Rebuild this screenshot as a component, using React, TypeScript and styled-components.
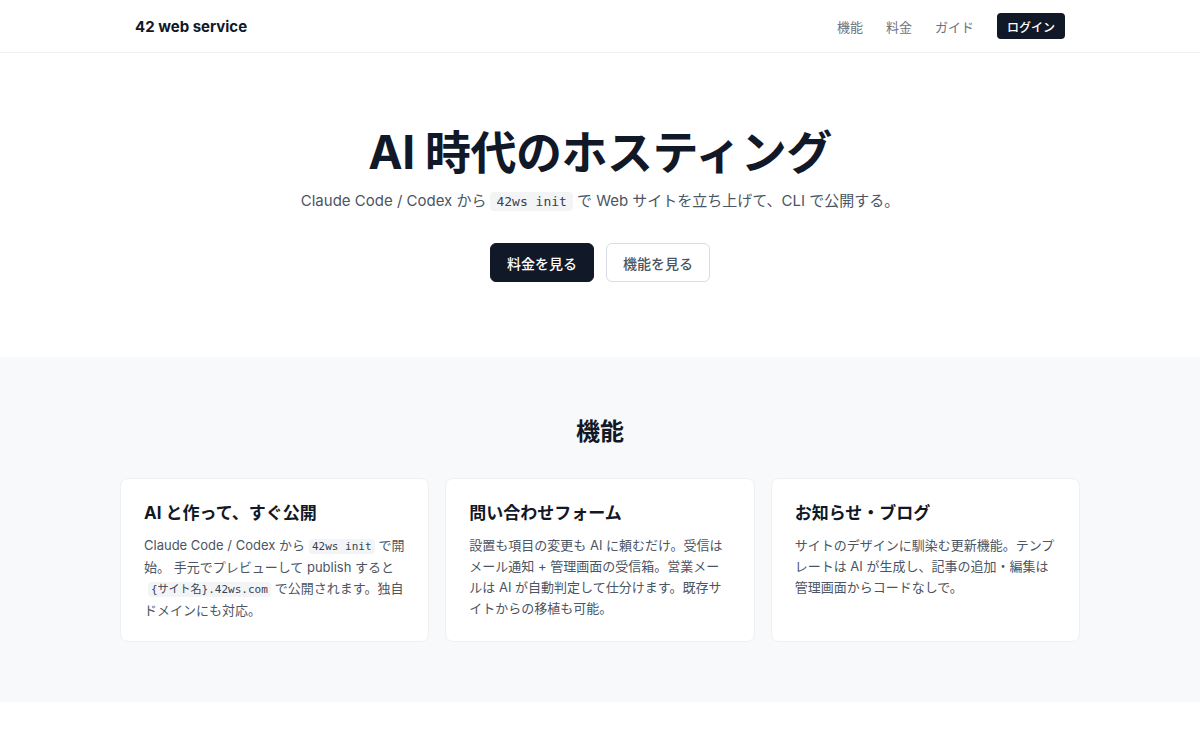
import React from "react";
import styled, { createGlobalStyle } from "styled-components";

const Global = createGlobalStyle`
  * { box-sizing: border-box; }
  body {
    margin: 0;
    font-family: "Inter", "Noto Sans CJK JP", sans-serif;
    color: #111827;
    background: #ffffff;
  }
`;

const Header = styled.header`
  border-bottom: 1px solid #f1f2f4;
  background: #fff;
`;

const HeaderInner = styled.div`
  max-width: 960px;
  margin: 0 auto;
  padding: 0 15px;
  height: 52px;
  display: flex;
  align-items: center;
  justify-content: space-between;
`;

const Logo = styled.div`
  font-size: 15px;
  font-weight: 700;
  color: #111827;
`;

const Nav = styled.nav`
  display: flex;
  align-items: center;
  gap: 23px;
`;

const NavLink = styled.a`
  font-size: 13px;
  color: #6b7280;
  text-decoration: none;
`;

const LoginButton = styled.button`
  height: 26px;
  padding: 0 10px;
  border: none;
  border-radius: 4px;
  background: #111827;
  color: #fff;
  font-size: 12px;
  font-family: inherit;
  font-weight: 500;
`;

const Hero = styled.section`
  padding: 70px 20px 75px;
  text-align: center;
`;

const Title = styled.h1`
  margin: 0;
  font-size: 46px;
  line-height: 58px;
  font-weight: 700;
  color: #111827;
  letter-spacing: -0.5px;
`;

const Lead = styled.p`
  margin: 7px 0 0;
  font-size: 15px;
  line-height: 26px;
  color: #4b5563;
`;

const Code = styled.code<{ $small?: boolean }>`
  font-family: "DejaVu Sans Mono", "Liberation Mono", "Noto Sans CJK JP", monospace;
  font-size: ${(p) => (p.$small ? "11px" : "13px")};
  background: #f3f4f6;
  border-radius: 4px;
  padding: ${(p) => (p.$small ? "1px 3px" : "2px 6px")};
  margin: 0 4px;
  color: #374151;
`;

const Actions = styled.div`
  margin-top: 28px;
  display: flex;
  justify-content: center;
  gap: 12px;
`;

const Button = styled.button<{ $primary?: boolean }>`
  height: 39px;
  padding: 0 16px;
  border-radius: 6px;
  font-size: 14px;
  font-family: inherit;
  font-weight: 500;
  border: 1px solid ${(p) => (p.$primary ? "#111827" : "#d9dce1")};
  background: ${(p) => (p.$primary ? "#111827" : "#fff")};
  color: ${(p) => (p.$primary ? "#fff" : "#4b5563")};
`;

const Features = styled.section`
  background: #f8f9fb;
  padding: 59px 20px 60px;
`;

const SectionTitle = styled.h2`
  margin: 0;
  text-align: center;
  font-size: 24px;
  line-height: 32px;
  font-weight: 700;
  color: #111827;
`;

const Grid = styled.div`
  max-width: 960px;
  margin: 30px auto 0;
  display: grid;
  grid-template-columns: repeat(3, 1fr);
  gap: 16px;
`;

const Card = styled.div`
  background: #fff;
  border: 1px solid #eef0f3;
  border-radius: 8px;
  padding: 21px 23px 20px;
`;

const CardTitle = styled.h3`
  margin: 0;
  font-size: 17px;
  line-height: 27px;
  font-weight: 700;
  color: #111827;
`;

const CardText = styled.p`
  margin: 8px 0 0;
  font-size: 13px;
  line-height: 21px;
  color: #4b5563;
  min-height: 84px;
`;

const Footer = styled.div`
  height: 60px;
  background: #fff;
`;

export default function App() {
  return (
    <>
      <Global />
      <Header>
        <HeaderInner>
          <Logo>42 web service</Logo>
          <Nav>
            <NavLink href="#">機能</NavLink>
            <NavLink href="#">料金</NavLink>
            <NavLink href="#">ガイド</NavLink>
            <LoginButton>ログイン</LoginButton>
          </Nav>
        </HeaderInner>
      </Header>
      <Hero>
        <Title>AI 時代のホスティング</Title>
        <Lead>
          Claude Code / Codex から<Code>42ws init</Code>で Web サイトを立ち上げて、CLI で公開する。
        </Lead>
        <Actions>
          <Button $primary>料金を見る</Button>
          <Button>機能を見る</Button>
        </Actions>
      </Hero>
      <Features>
        <SectionTitle>機能</SectionTitle>
        <Grid>
          <Card>
            <CardTitle>AI と作って、すぐ公開</CardTitle>
            <CardText>
              Claude Code / Codex から<Code $small>42ws init</Code>で開始。 手元でプレビューして publish すると
              <Code $small>{"{サイト名}.42ws.com"}</Code>で公開されます。独自ドメインにも対応。
            </CardText>
          </Card>
          <Card>
            <CardTitle>問い合わせフォーム</CardTitle>
            <CardText>
              設置も項目の変更も AI に頼むだけ。受信はメール通知 + 管理画面の受信箱。営業メールは AI が自動判定して仕分けます。既存サイトからの移植も可能。
            </CardText>
          </Card>
          <Card>
            <CardTitle>お知らせ・ブログ</CardTitle>
            <CardText>
              サイトのデザインに馴染む更新機能。テンプレートは AI が生成し、記事の追加・編集は管理画面からコードなしで。
            </CardText>
          </Card>
        </Grid>
      </Features>
      <Footer />
    </>
  );
}
